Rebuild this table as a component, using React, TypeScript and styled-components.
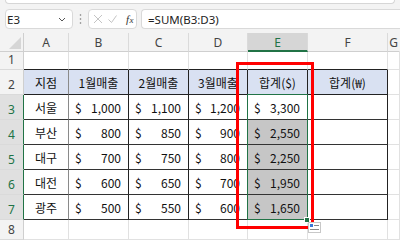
import React from "react";
import styled, { createGlobalStyle, css } from "styled-components";

const Global = createGlobalStyle`
  html, body { margin: 0; padding: 0; background: #f3f3f3; }
  body { width: 400px; height: 240px; overflow: hidden; font-family: "Noto Sans CJK KR", "Noto Sans", sans-serif; }
`;

const Page = styled.div`
  position: relative;
  width: 400px;
  height: 240px;
  overflow: hidden;
  background: #f3f3f3;
`;

const RibbonEdge = styled.div`
  height: 3px;
  margin: 0 5px;
  background: #fff;
  border: 1px solid #d6d6d6;
  border-top: none;
  border-radius: 0 0 6px 6px;
`;

const FormulaBar = styled.div`
  display: flex;
  align-items: center;
  height: 20px;
  margin-top: 5px;
  padding-left: 5px;
`;

const Box = styled.div<{ $w?: number; $grow?: boolean }>`
  box-sizing: border-box;
  height: 20px;
  background: #fff;
  border: 1px solid #d9d9d9;
  border-radius: 4px;
  display: flex;
  align-items: center;
  ${(p) => (p.$w ? css`width: ${p.$w}px;` : "")}
  ${(p) => (p.$grow ? css`flex: 1; border-right: none; border-radius: 4px 0 0 4px;` : "")}
`;

const NameText = styled.span`
  flex: 1;
  padding-left: 1px;
  font-family: "Noto Sans", sans-serif;
  font-size: 11.5px;
  color: #222;
`;

const FormulaText = styled.span`
  padding-left: 6px;
  font-family: "Noto Sans", sans-serif;
  font-size: 11.5px;
  color: #222;
`;

const Sep = styled.div`
  width: 15px;
  display: flex;
  justify-content: center;
`;

const Sheet = styled.div`
  margin-top: 4px;
  display: grid;
  grid-template-columns: 24px 45px 60px 60px 59px 60px 80px 12px;
  grid-template-rows: 19px 18px 25px 25px 25px 25px 25px 25px 20px;
`;

const ColHead = styled.div<{ $sel?: boolean; $last?: boolean }>`
  box-sizing: border-box;
  background: ${(p) => (p.$sel ? "#d6d6d6" : "#f3f3f3")};
  border-right: 1px solid ${(p) => (p.$last ? "transparent" : "#dadada")};
  border-bottom: ${(p) => (p.$sel ? "2px solid #217346" : "1px solid #cfcfcf")};
  color: ${(p) => (p.$sel ? "#217346" : "#444")};
  font-family: "Noto Sans", sans-serif;
  font-size: 12px;
  display: flex;
  align-items: center;
  justify-content: center;
  padding-top: 1px;
`;

const Corner = styled.div`
  box-sizing: border-box;
  background: #f3f3f3;
  border-right: 1px solid #cfcfcf;
  border-bottom: 1px solid #cfcfcf;
  display: flex;
  align-items: flex-end;
  justify-content: flex-end;
  padding: 0 2px 2px 0;
`;

const RowHead = styled.div<{ $sel?: boolean }>`
  box-sizing: border-box;
  background: ${(p) => (p.$sel ? "#e0e0e0" : "#f3f3f3")};
  border-right: 1px solid ${(p) => (p.$sel ? "#217346" : "#cfcfcf")};
  border-bottom: 1px solid #dadada;
  color: ${(p) => (p.$sel ? "#217346" : "#444")};
  font-family: "Noto Sans", sans-serif;
  font-size: 12px;
  display: flex;
  align-items: flex-end;
  justify-content: center;
  padding-bottom: 1px;
`;

type CellProps = {
  $head?: boolean;
  $shade?: boolean;
  $r?: string;
  $b?: string;
  $align?: "center" | "acct";
};

const Cell = styled.div<CellProps>`
  box-sizing: border-box;
  background: ${(p) => (p.$head ? "#d9e1f2" : p.$shade ? "#c6c6c6" : "#fff")};
  border-right: 1px solid ${(p) => p.$r || "#e1e1e1"};
  border-bottom: 1px solid ${(p) => p.$b || "#e1e1e1"};
  font-size: 12px;
  color: #111;
  display: flex;
  align-items: center;
  justify-content: ${(p) => (p.$align === "acct" ? "space-between" : "center")};
  padding: ${(p) => (p.$align === "acct" ? "0 7px 0 6px" : "0")};
  white-space: nowrap;
  overflow: hidden;
`;

const Overlay = styled.div<{ $x: number; $y: number; $w: number; $h: number }>`
  position: absolute;
  left: ${(p) => p.$x}px;
  top: ${(p) => p.$y}px;
  width: ${(p) => p.$w}px;
  height: ${(p) => p.$h}px;
  box-sizing: border-box;
  pointer-events: none;
`;

const Selection = styled(Overlay)`
  border: 1px solid #217346;
`;

const RedFrame = styled(Overlay)`
  border: 3px solid #ff0000;
`;

const Handle = styled(Overlay)`
  background: #217346;
  border: 1px solid #fff;
`;

const QuickIcon = styled(Overlay)`
  background: #fff;
  border: 1px solid #c8c8c8;
  display: flex;
  align-items: center;
  justify-content: center;
`;

const cols = ["A", "B", "C", "D", "E", "F", "G"];
const headers = ["지점", "1월매출", "2월매출", "3월매출", "합계($)", "합계(₩)"];
const data: [string, string, string, string, string][] = [
  ["서울", "1,000", "1,100", "1,200", "3,300"],
  ["부산", "800", "850", "900", "2,550"],
  ["대구", "700", "750", "800", "2,250"],
  ["대전", "600", "650", "700", "1,950"],
  ["광주", "500", "550", "600", "1,650"],
];

export default function App() {
  return (
    <Page>
      <Global />
      <RibbonEdge />
      <FormulaBar>
        <Box $w={68}>
          <NameText>E3</NameText>
          <svg width="10" height="8" viewBox="0 0 10 8" style={{ marginRight: 5 }}>
            <path d="M2 3 L5 6 L8 3" fill="none" stroke="#555" strokeWidth="1" />
          </svg>
        </Box>
        <Sep>
          <svg width="3" height="12" viewBox="0 0 3 12">
            <circle cx="1.5" cy="2" r="0.8" fill="#777" />
            <circle cx="1.5" cy="6" r="0.8" fill="#777" />
            <circle cx="1.5" cy="10" r="0.8" fill="#777" />
          </svg>
        </Sep>
        <Box $w={49}>
          <svg width="47" height="18" viewBox="0 0 47 18">
            <path d="M5 5 L13 13 M13 5 L5 13" stroke="#c4c4c4" strokeWidth="1" />
            <path d="M19.5 9.5 L22.5 12.5 L27.5 5.5" fill="none" stroke="#c4c4c4" strokeWidth="1" />
            <text x="37" y="13" fontFamily="Liberation Serif, serif" fontStyle="italic" fontSize="11" fill="#333">f</text>
            <text x="40.5" y="13" fontFamily="Liberation Serif, serif" fontStyle="italic" fontSize="9" fill="#333">x</text>
          </svg>
        </Box>
        <div style={{ width: 4 }} />
        <Box $grow>
          <FormulaText>=SUM(B3:D3)</FormulaText>
        </Box>
      </FormulaBar>
      <Sheet>
        <Corner>
          <svg width="12" height="12" viewBox="0 0 12 12">
            <path d="M12 0 L12 12 L0 12 Z" fill="#d6d6d6" />
          </svg>
        </Corner>
        {cols.map((c, i) => (
          <ColHead key={c} $sel={c === "E"} $last={i === cols.length - 1}>
            {c}
          </ColHead>
        ))}

        <RowHead>1</RowHead>
        {cols.map((c, i) => (
          <Cell key={"r1" + c} $b={i < 6 ? "#222" : undefined} />
        ))}

        <RowHead>2</RowHead>
        {headers.map((h, i) => (
          <Cell key={"h" + i} $head $r={i === 0 ? "#8a8a8a" : "#222"} $b="#222">
            {h}
          </Cell>
        ))}
        <Cell />

        {data.map((row, ri) => (
          <React.Fragment key={"row" + ri}>
            <RowHead $sel>{ri + 3}</RowHead>
            <Cell $r="#8a8a8a" $b="#333">{row[0]}</Cell>
            {row.slice(1).map((v, ci) => (
              <Cell key={ci} $align="acct" $r="#222" $b="#333" $shade={ci === 3 && ri > 0}>
                <span>$</span>
                <span>{v}</span>
              </Cell>
            ))}
            <Cell $r="#222" $b="#333" />
            <Cell />
          </React.Fragment>
        ))}

        <RowHead>8</RowHead>
        {cols.map((c) => (
          <Cell key={"r8" + c} />
        ))}
      </Sheet>
      <Selection $x={247} $y={94} $w={61} $h={126} />
      <Handle $x={304} $y={217} $w={6} $h={6} />
      <RedFrame $x={236} $y={62} $w={78} $h={167} />
      <QuickIcon $x={308} $y={222} $w={13} $h={11}>
        <svg width="11" height="9" viewBox="0 0 11 9">
          <rect x="1" y="1" width="3" height="3" fill="#3b78d8" />
          <path d="M5 2.5 H10 M1 6.5 H10" stroke="#888" strokeWidth="1" />
        </svg>
      </QuickIcon>
    </Page>
  );
}
